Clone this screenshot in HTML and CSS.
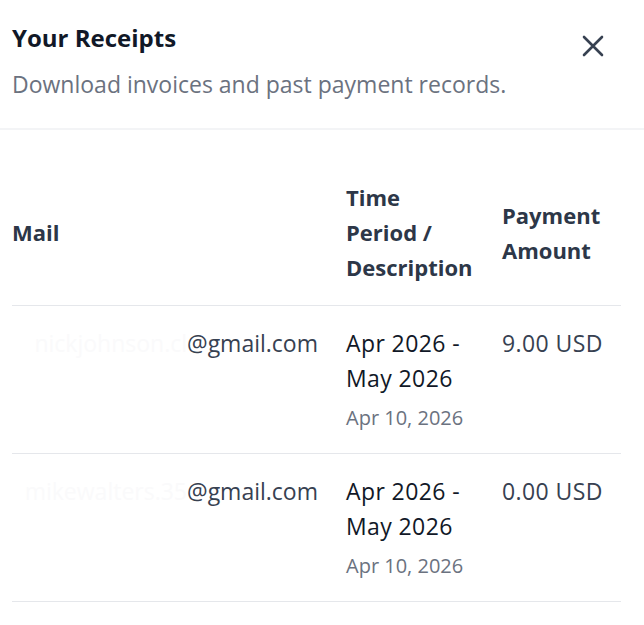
FILE: index.html
```html
<!DOCTYPE html>
<html lang="en">
<head>
  <meta charset="UTF-8" />
  <meta name="viewport" content="width=device-width, initial-scale=1.0" />
  <title>Your Receipts</title>
  <link rel="stylesheet" href="styles.css">
</head>
<body>
  <div class="receipts">
    <div class="receipts-header">
      <div class="receipts-heading">
        <h2 class="receipts-title">Your Receipts</h2>
        <p class="receipts-subtitle">Download invoices and past payment records.</p>
      </div>
      <button class="close-btn" aria-label="Close">
        <svg width="22" height="22" viewBox="0 0 22 22" fill="none" stroke="currentColor" stroke-width="2.6" stroke-linecap="round">
          <path d="M2 2 L20 20 M20 2 L2 20" />
        </svg>
      </button>
    </div>

    <table class="receipts-table">
      <thead>
        <tr>
          <th class="col-mail">Mail</th>
          <th class="col-period">Time Period&nbsp;/ Description</th>
          <th class="col-amount">Payment Amount</th>
        </tr>
      </thead>
      <tbody>
        <tr>
          <td class="mail"><span class="hidden-part">nickjohnson.cl</span>@gmail.com</td>
          <td>
            <div class="period">Apr 2026 - May 2026</div>
            <div class="date">Apr 10, 2026</div>
          </td>
          <td class="amount">9.00 USD</td>
        </tr>
        <tr>
          <td class="mail"><span class="hidden-part">mikewalters.35</span>@gmail.com</td>
          <td>
            <div class="period">Apr 2026 - May 2026</div>
            <div class="date">Apr 10, 2026</div>
          </td>
          <td class="amount">0.00 USD</td>
        </tr>
      </tbody>
    </table>
  </div>
</body>
</html>
```

FILE: styles.css
```css
body {
  margin: 0;
  background: #ffffff;
  font-family: 'Open Sans', 'Noto Sans', Arial, sans-serif;
  color: #111827;
}

.receipts {
  width: 644px;
}

.receipts-header {
  display: flex;
  align-items: flex-start;
  justify-content: space-between;
  padding: 22px 40px 30px 12px;
  border-bottom: 2px solid #f3f4f6;
}

.receipts-title {
  margin: 0 0 16px 0;
  font-size: 24px;
  line-height: 32px;
  font-weight: 700;
  color: #111827;
}

.receipts-subtitle {
  margin: 0;
  font-size: 23px;
  line-height: 28px;
  color: #6b7280;
}

.close-btn {
  margin-top: 13px;
  padding: 0;
  border: none;
  background: none;
  color: #374151;
  cursor: pointer;
  line-height: 0;
}

.receipts-table {
  margin: 30px 0 0 12px;
  width: 609px;
  border-collapse: collapse;
  table-layout: fixed;
}

.receipts-table th {
  text-align: left;
  vertical-align: middle;
  font-size: 22px;
  line-height: 35px;
  font-weight: 700;
  color: #2d3748;
  padding: 20px 12px 20px 0;
  border-bottom: 1px solid #e5e7eb;
}

.receipts-table th.col-mail {
  width: 306px;
  padding-right: 28px;
}

.receipts-table th.col-period {
  width: 132px;
  padding-right: 24px;
}

.receipts-table td {
  vertical-align: top;
  font-size: 23px;
  line-height: 35px;
  letter-spacing: 0.4px;
  padding: 20px 12px 20px 0;
  border-bottom: 1px solid #e5e7eb;
}

.receipts-table td.mail {
  padding-right: 28px;
  color: #374151;
  white-space: nowrap;
  text-align: right;
  letter-spacing: 0;
}

.hidden-part {
  color: #fafafb;
}

.period {
  color: #111827;
}

.date {
  margin-top: 8px;
  font-size: 20px;
  line-height: 28px;
  letter-spacing: 0;
  color: #6b7280;
}

.receipts-table tbody td {
  padding-bottom: 21px;
}

.amount {
  color: #374151;
}
```
